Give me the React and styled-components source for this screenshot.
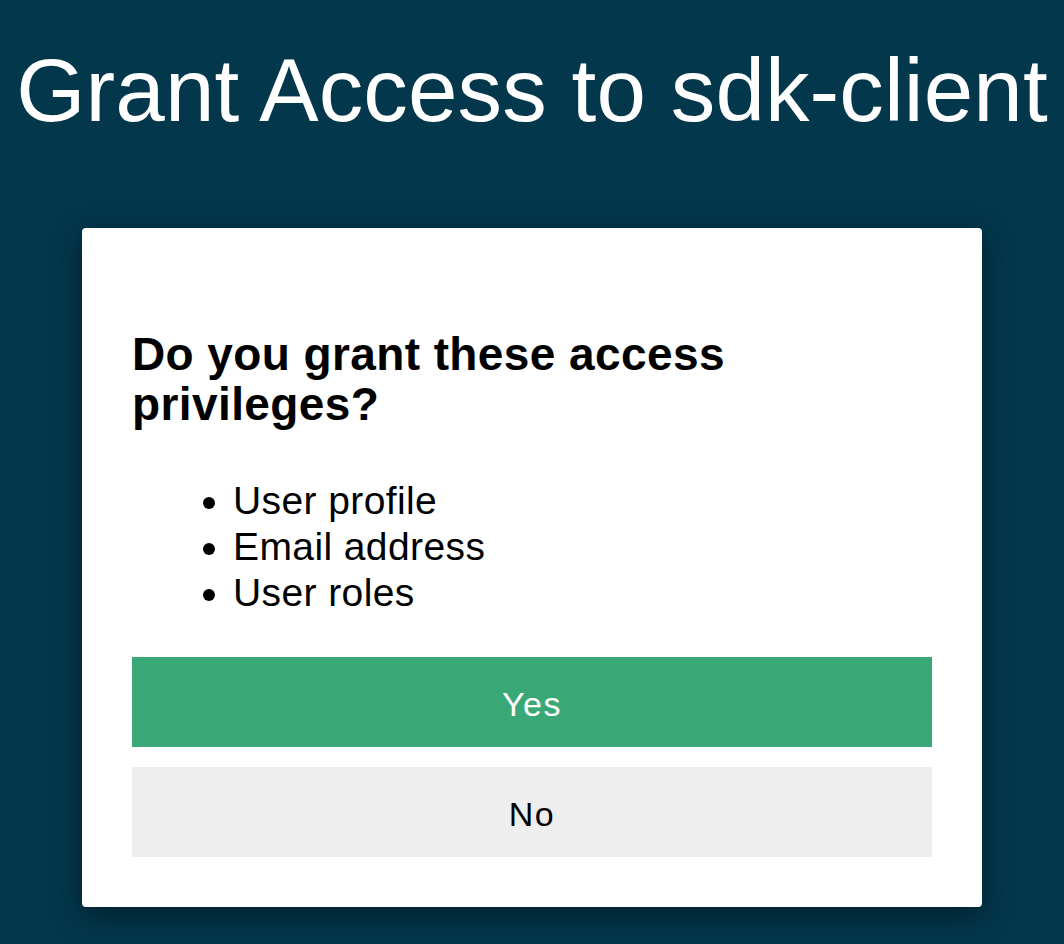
import React from "react";
import styled, { createGlobalStyle } from "styled-components";

const GlobalStyle = createGlobalStyle`
  html, body {
    margin: 0;
    padding: 0;
    background: #03374c;
    font-family: "Liberation Sans", Arial, Helvetica, sans-serif;
  }
  * {
    box-sizing: border-box;
  }
`;

const scopes = ["User profile", "Email address", "User roles"];

const App = () => {
  return (
    <>
      <GlobalStyle />
      <Page>
        <Title>Grant Access to sdk-client</Title>
        <Card>
          <Question>Do you grant these access privileges?</Question>
          <ScopeList>
            {scopes.map((s) => (
              <li key={s}>{s}</li>
            ))}
          </ScopeList>
          <Actions>
            <Button primary>Yes</Button>
            <Button>No</Button>
          </Actions>
        </Card>
      </Page>
    </>
  );
};

const Page = styled.div`
  min-height: 944px;
  display: flex;
  flex-direction: column;
  align-items: center;
  padding-top: 40px;
`;

const Title = styled.h1`
  margin: 0;
  color: #fff;
  font-size: 89px;
  font-weight: 300;
  line-height: 100px;
  letter-spacing: 0.1px;
  text-align: center;
  white-space: nowrap;
`;

const Card = styled.div`
  margin-top: 88px;
  width: 900px;
  background: #fff;
  border-radius: 4px;
  box-shadow: 0 8px 30px rgba(0, 0, 0, 0.45);
  padding: 101px 50px 50px;
`;

const Question = styled.h2`
  margin: 0;
  font-size: 46px;
  font-weight: 700;
  line-height: 50px;
  letter-spacing: 0.4px;
  color: #000;
`;

const ScopeList = styled.ul`
  margin: 49px 0 0;
  padding-left: 101px;
  font-size: 39px;
  line-height: 46px;
  letter-spacing: 0.4px;
  color: #000;
`;

const Actions = styled.div`
  margin-top: 41px;
  display: flex;
  flex-direction: column;
  gap: 20px;
`;

const Button = styled.button`
  height: 90px;
  width: 100%;
  border: none;
  border-radius: 0;
  padding: 4px 0 0;
  font-family: inherit;
  font-size: 34px;
  letter-spacing: 1.5px;
  cursor: pointer;
  background: ${(p) => (p.primary ? "#3aa876" : "#eeeeee")};
  color: ${(p) => (p.primary ? "#fff" : "#000")};
`;

export default App;
